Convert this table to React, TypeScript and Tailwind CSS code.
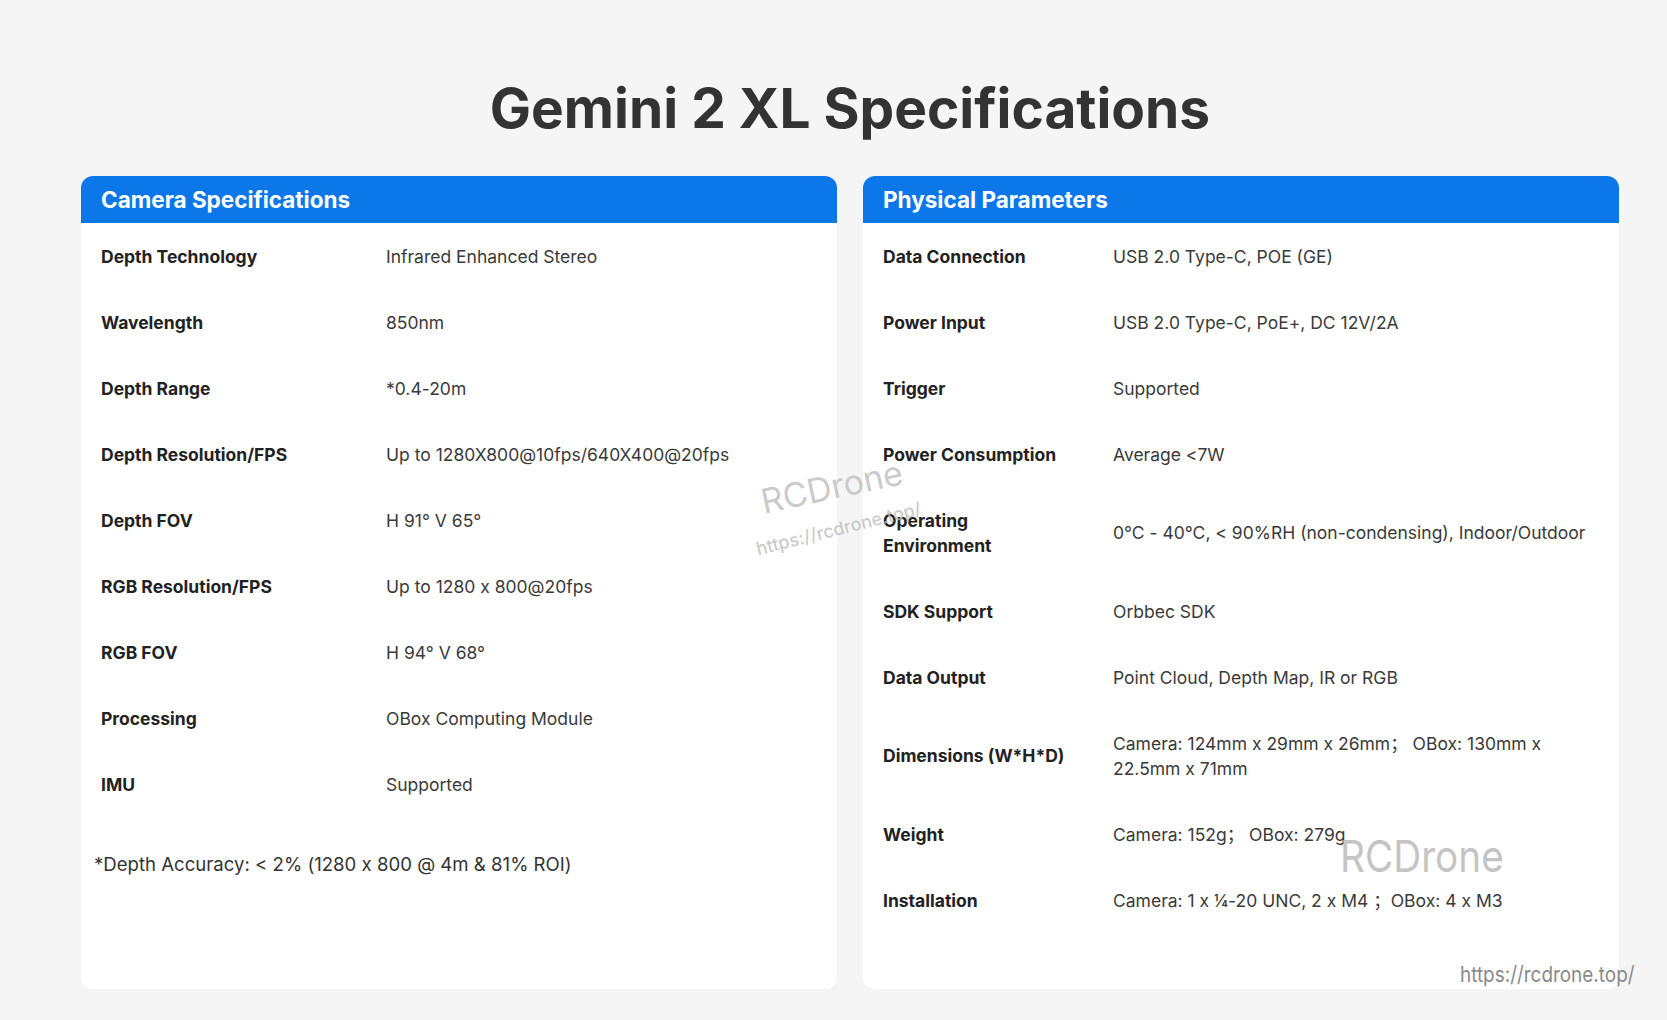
const camera: [string, string][] = [
  ["Depth Technology", "Infrared Enhanced Stereo"],
  ["Wavelength", "850nm"],
  ["Depth Range", "*0.4-20m"],
  ["Depth Resolution/FPS", "Up to 1280X800@10fps/640X400@20fps"],
  ["Depth FOV", "H 91° V 65°"],
  ["RGB Resolution/FPS", "Up to 1280 x 800@20fps"],
  ["RGB FOV", "H 94° V 68°"],
  ["Processing", "OBox Computing Module"],
  ["IMU", "Supported"],
];

const physical: [string, string][] = [
  ["Data Connection", "USB 2.0 Type-C, POE (GE)"],
  ["Power Input", "USB 2.0 Type-C, PoE+, DC 12V/2A"],
  ["Trigger", "Supported"],
  ["Power Consumption", "Average <7W"],
  ["Operating\nEnvironment", "0°C - 40°C, < 90%RH (non-condensing), Indoor/Outdoor"],
  ["SDK Support", "Orbbec SDK"],
  ["Data Output", "Point Cloud, Depth Map, IR or RGB"],
  ["Dimensions (W*H*D)", "Camera: 124mm x 29mm x 26mm； OBox: 130mm x\n22.5mm x 71mm"],
  ["Weight", "Camera: 152g； OBox: 279g"],
  ["Installation", "Camera: 1 x ¼-20 UNC, 2 x M4 ；OBox: 4 x M3"],
];

function SpecCard({
  title,
  rows,
  labelWidth,
  children,
}: {
  title: string;
  rows: [string, string][];
  labelWidth: string;
  children?: React.ReactNode;
}) {
  return (
    <div className="flex flex-col overflow-hidden rounded-[12px] bg-white pb-[56px]">
      <div className="flex h-[47px] items-center bg-[#0b77e9] px-5 text-[22.5px] font-bold text-white">
        {title}
      </div>
      <div className="px-5">
        {rows.map(([label, value]) => (
          <div key={label} className="flex items-center py-[20.5px] text-[17.5px] leading-[25px]">
            <div className={`${labelWidth} shrink-0 whitespace-pre font-bold text-[#222]`}>{label}</div>
            <div className="whitespace-pre text-[#3a3a3a]">{value}</div>
          </div>
        ))}
      </div>
      {children}
    </div>
  );
}

export default function App() {
  return (
    <div
      className="relative min-h-[1020px] bg-[#f5f5f5] [font-feature-settings:'calt'_0]"
      style={{ fontFamily: "Inter, 'Noto Sans', 'Noto Sans CJK SC', sans-serif" }}
    >
      <div className="pl-[81px] pr-[48px] pt-[72px] pb-[31px]">
        <h1 className="text-center text-[55px] leading-[72px] font-bold text-[#333]">
          Gemini 2 XL Specifications
        </h1>
        <div className="mt-[32px] grid grid-cols-2 gap-[26px]">
          <SpecCard title="Camera Specifications" rows={camera} labelWidth="w-[285px]">
            <p className="mt-[32px] pl-[13px] text-[18.6px] leading-[30px] text-[#333]">
              *Depth Accuracy: &lt; 2% (1280 x 800 @ 4m &amp; 81% ROI)
            </p>
          </SpecCard>
          <SpecCard title="Physical Parameters" rows={physical} labelWidth="w-[230px]" />
        </div>
      </div>

      <div className="pointer-events-none absolute left-[760px] top-[470px] -rotate-[12deg] text-[34px] leading-none text-[#bdbdbd]/80">
        RCDrone
      </div>
      <div className="pointer-events-none absolute left-[754px] top-[520px] -rotate-[14deg] text-[18px] font-medium leading-none text-[#bdbdbd]/80">
        https://rcdrone.top/
      </div>
      <div className="pointer-events-none absolute left-[1340px] top-[834px] origin-left scale-x-[0.88] text-[44px] leading-none text-[#c4c4c4]">
        RCDrone
      </div>
      <div className="pointer-events-none absolute left-[1460px] top-[963px] origin-left scale-x-[0.86] text-[22px] leading-none text-[#8a8a8a]">
        https://rcdrone.top/
      </div>
    </div>
  );
}
